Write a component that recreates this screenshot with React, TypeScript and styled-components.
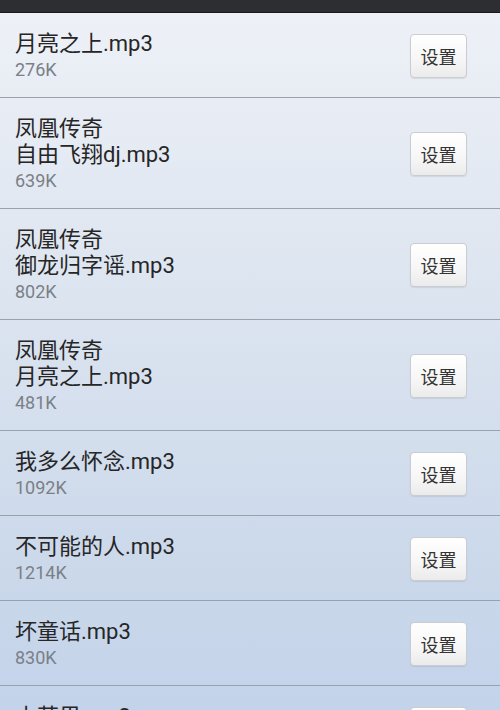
import React from 'react';
import styled, { createGlobalStyle } from 'styled-components';

type Song = { artist?: string; title: string; size: string };

const songs: Song[] = [
  { title: '月亮之上.mp3', size: '276K' },
  { artist: '凤凰传奇', title: '自由飞翔dj.mp3', size: '639K' },
  { artist: '凤凰传奇', title: '御龙归字谣.mp3', size: '802K' },
  { artist: '凤凰传奇', title: '月亮之上.mp3', size: '481K' },
  { title: '我多么怀念.mp3', size: '1092K' },
  { title: '不可能的人.mp3', size: '1214K' },
  { title: '坏童话.mp3', size: '830K' },
  { title: '小苹果.mp3', size: '745K' },
];

export default function App() {
  return (
    <>
      <GlobalStyle />
      <StyledScreen>
        <StyledStatusBar />
        <StyledList>
          {songs.map((song, i) => (
            <StyledRow key={i}>
              <StyledInfo>
                {song.artist && <StyledTitle>{song.artist}</StyledTitle>}
                <StyledTitle>{song.title}</StyledTitle>
                <StyledSize>{song.size}</StyledSize>
              </StyledInfo>
              <StyledButton>设置</StyledButton>
            </StyledRow>
          ))}
        </StyledList>
      </StyledScreen>
    </>
  );
}

const GlobalStyle = createGlobalStyle`
  html, body {
    margin: 0;
    padding: 0;
  }
  body {
    font-family: Roboto, 'Noto Sans CJK SC', sans-serif;
  }
`;

const StyledScreen = styled.div`
  width: 500px;
  height: 710px;
  overflow: hidden;
  display: flex;
  flex-direction: column;
  background: linear-gradient(180deg, #eef1f7 0%, #dde5f0 40%, #c9d7ea 85%, #c3d3ea 100%);
`;

const StyledStatusBar = styled.div`
  height: 12px;
  flex-shrink: 0;
  background: #2c2e31;
  border-bottom: 1px solid #1a1b1d;
`;

const StyledList = styled.div`
  display: flex;
  flex-direction: column;
`;

const StyledRow = styled.div`
  display: flex;
  align-items: center;
  justify-content: space-between;
  padding: 18px 33px 14px 15px;
  border-bottom: 1px solid #98a2ae;
`;

const StyledInfo = styled.div`
  display: flex;
  flex-direction: column;
`;

const StyledTitle = styled.div`
  font-size: 22px;
  line-height: 26px;
  color: #262626;
  white-space: nowrap;
`;

const StyledSize = styled.div`
  font-size: 18px;
  line-height: 26px;
  color: #7b8087;
`;

const StyledButton = styled.button`
  width: 57px;
  height: 44px;
  margin-top: -2px;
  border: 1px solid #c9ccd1;
  border-radius: 4px;
  background: linear-gradient(180deg, #ffffff 0%, #f6f6f6 60%, #ebebeb 100%);
  box-shadow: 0 1px 1px rgba(0, 0, 0, 0.08);
  font-family: 'Noto Sans CJK SC', sans-serif;
  font-size: 18px;
  color: #333;
  padding: 0;
  flex-shrink: 0;
`;
